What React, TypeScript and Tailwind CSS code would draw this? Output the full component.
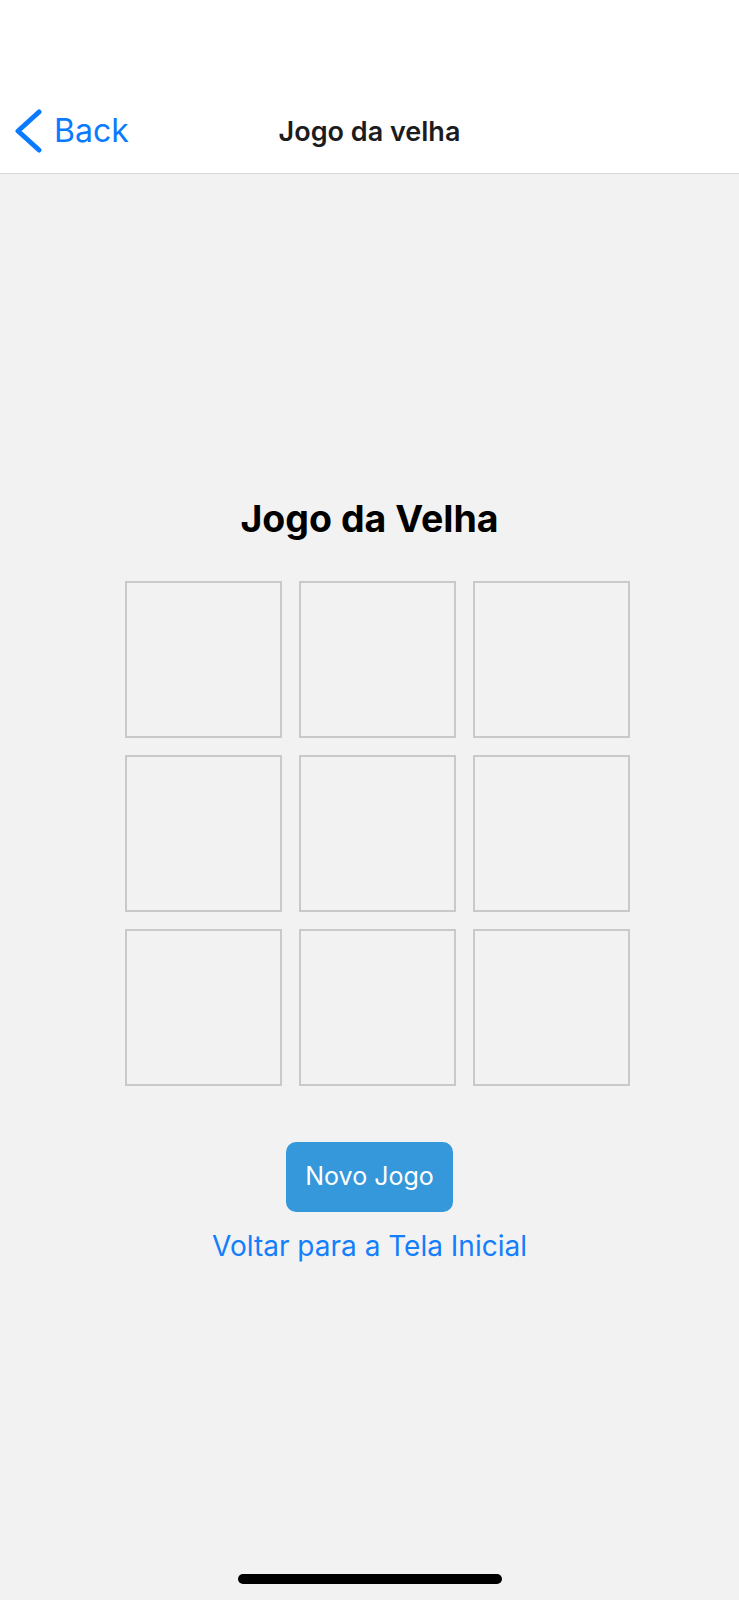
import React from "react";

export default function App() {
  const cells = Array.from({ length: 9 });
  return (
    <div
      className="h-[1600px] w-full flex flex-col bg-[#f2f2f2]"
      style={{ fontFamily: "Inter, 'Noto Sans', sans-serif" }}
    >
      <header className="h-[174px] bg-white border-b border-[#d9d9d9] flex flex-col justify-end">
        <div className="h-[84px] grid grid-cols-[1fr_auto_1fr] items-center">
          <div className="flex items-center pl-[15px] text-[#0a7aff]">
            <svg width="28" height="44" viewBox="0 0 28 44" className="mr-[11px]">
              <polyline
                points="24,3 3,22 24,41"
                fill="none"
                stroke="#0a7aff"
                strokeWidth="5"
                strokeLinecap="round"
                strokeLinejoin="round"
              />
            </svg>
            <span className="text-[32px] leading-none">Back</span>
          </div>
          <div className="text-[27px] font-semibold text-[#1c1c1e] leading-none">Jogo da velha</div>
          <div />
        </div>
      </header>
      <main className="flex-1 flex flex-col items-center">
        <h1 className="mt-[326px] text-[37.5px] font-bold leading-none text-black">Jogo da Velha</h1>
        <div className="mt-[43px] pl-[15px]">
          <div className="grid grid-cols-3 gap-[17px]">
            {cells.map((_, i) => (
              <div key={i} className="w-[157px] h-[157px] border-2 border-[#c9c9c9]" />
            ))}
          </div>
        </div>
        <button className="mt-[56px] w-[167px] h-[70px] rounded-[10px] bg-[#3498db] text-white text-[25px] leading-none">
          Novo Jogo
        </button>
        <div className="mt-[20px] text-[28px] leading-none text-[#147efb]">Voltar para a Tela Inicial</div>
      </main>
      <div className="flex justify-center pb-[16px]">
        <div className="w-[264px] h-[10px] rounded-full bg-black" />
      </div>
    </div>
  );
}
